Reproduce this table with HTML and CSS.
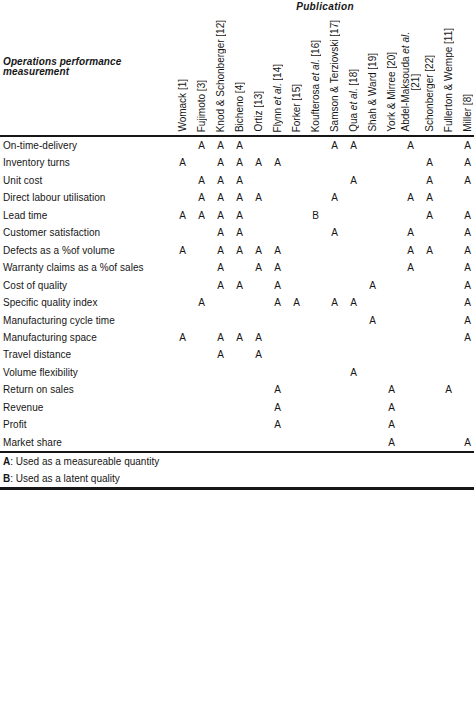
FILE: index.html
```html
<!DOCTYPE html>
<html lang="en">
<head>
<meta charset="utf-8">
<title>Operations performance measurement</title>
<link rel="stylesheet" href="styles.css">
</head>
<body>
<div class="frame">
<table class="matrix">
<colgroup>
<col class="c-label">
<col class="c-pub"><col class="c-pub"><col class="c-pub"><col class="c-pub">
<col class="c-pub"><col class="c-pub"><col class="c-pub"><col class="c-pub">
<col class="c-pub"><col class="c-pub"><col class="c-pub"><col class="c-pub">
<col class="c-pub"><col class="c-pub"><col class="c-pub"><col class="c-pub">
</colgroup>
<thead>
<tr class="pub-row">
<th class="label-head" rowspan="2">Operations performance measurement</th>
<th class="pub-title" colspan="16">Publication</th>
</tr>
<tr class="names-row">
<th><div class="vbox"><span class="vtext">Womack [1]</span></div></th>
<th><div class="vbox"><span class="vtext">Fujimoto [3]</span></div></th>
<th><div class="vbox"><span class="vtext">Knod &amp; Schonberger [12]</span></div></th>
<th><div class="vbox"><span class="vtext">Bicheno [4]</span></div></th>
<th><div class="vbox"><span class="vtext">Ortiz [13]</span></div></th>
<th><div class="vbox"><span class="vtext">Flynn <i>et al</i>. [14]</span></div></th>
<th><div class="vbox"><span class="vtext">Forker [15]</span></div></th>
<th><div class="vbox"><span class="vtext">Koufterosa <i>et al</i>. [16]</span></div></th>
<th><div class="vbox"><span class="vtext">Samson &amp; Terziovski [17]</span></div></th>
<th><div class="vbox"><span class="vtext">Qua <i>et al</i>. [18]</span></div></th>
<th><div class="vbox"><span class="vtext">Shah &amp; Ward [19]</span></div></th>
<th><div class="vbox"><span class="vtext">York &amp; Mirree [20]</span></div></th>
<th><div class="vbox"><span class="vtext">Abdel-Maksouda <i>et al</i>.<br>[21]</span></div></th>
<th><div class="vbox"><span class="vtext">Schonberger [22]</span></div></th>
<th><div class="vbox"><span class="vtext">Fullerton &amp; Wempe [11]</span></div></th>
<th><div class="vbox"><span class="vtext">Miller [8]</span></div></th>
</tr>
</thead>
<tbody>
<tr><th>On-time-delivery</th><td></td><td>A</td><td>A</td><td>A</td><td></td><td></td><td></td><td></td><td>A</td><td>A</td><td></td><td></td><td>A</td><td></td><td></td><td>A</td></tr>
<tr><th>Inventory turns</th><td>A</td><td></td><td>A</td><td>A</td><td>A</td><td>A</td><td></td><td></td><td></td><td></td><td></td><td></td><td></td><td>A</td><td></td><td>A</td></tr>
<tr><th>Unit cost</th><td></td><td>A</td><td>A</td><td>A</td><td></td><td></td><td></td><td></td><td></td><td>A</td><td></td><td></td><td></td><td>A</td><td></td><td>A</td></tr>
<tr><th>Direct labour utilisation</th><td></td><td>A</td><td>A</td><td>A</td><td>A</td><td></td><td></td><td></td><td>A</td><td></td><td></td><td></td><td>A</td><td>A</td><td></td><td></td></tr>
<tr><th>Lead time</th><td>A</td><td>A</td><td>A</td><td>A</td><td></td><td></td><td></td><td>B</td><td></td><td></td><td></td><td></td><td></td><td>A</td><td></td><td>A</td></tr>
<tr><th>Customer satisfaction</th><td></td><td></td><td>A</td><td>A</td><td></td><td></td><td></td><td></td><td>A</td><td></td><td></td><td></td><td>A</td><td></td><td></td><td>A</td></tr>
<tr><th>Defects as a %of volume</th><td>A</td><td></td><td>A</td><td>A</td><td>A</td><td>A</td><td></td><td></td><td></td><td></td><td></td><td></td><td>A</td><td>A</td><td></td><td>A</td></tr>
<tr><th>Warranty claims as a %of sales</th><td></td><td></td><td>A</td><td></td><td>A</td><td>A</td><td></td><td></td><td></td><td></td><td></td><td></td><td>A</td><td></td><td></td><td>A</td></tr>
<tr><th>Cost of quality</th><td></td><td></td><td>A</td><td>A</td><td></td><td>A</td><td></td><td></td><td></td><td></td><td>A</td><td></td><td></td><td></td><td></td><td>A</td></tr>
<tr><th>Specific quality index</th><td></td><td>A</td><td></td><td></td><td></td><td>A</td><td>A</td><td></td><td>A</td><td>A</td><td></td><td></td><td></td><td></td><td></td><td>A</td></tr>
<tr><th>Manufacturing cycle time</th><td></td><td></td><td></td><td></td><td></td><td></td><td></td><td></td><td></td><td></td><td>A</td><td></td><td></td><td></td><td></td><td>A</td></tr>
<tr><th>Manufacturing space</th><td>A</td><td></td><td>A</td><td>A</td><td>A</td><td></td><td></td><td></td><td></td><td></td><td></td><td></td><td></td><td></td><td></td><td>A</td></tr>
<tr><th>Travel distance</th><td></td><td></td><td>A</td><td></td><td>A</td><td></td><td></td><td></td><td></td><td></td><td></td><td></td><td></td><td></td><td></td><td></td></tr>
<tr><th>Volume flexibility</th><td></td><td></td><td></td><td></td><td></td><td></td><td></td><td></td><td></td><td>A</td><td></td><td></td><td></td><td></td><td></td><td></td></tr>
<tr><th>Return on sales</th><td></td><td></td><td></td><td></td><td></td><td>A</td><td></td><td></td><td></td><td></td><td></td><td>A</td><td></td><td></td><td>A</td><td></td></tr>
<tr><th>Revenue</th><td></td><td></td><td></td><td></td><td></td><td>A</td><td></td><td></td><td></td><td></td><td></td><td>A</td><td></td><td></td><td></td><td></td></tr>
<tr><th>Profit</th><td></td><td></td><td></td><td></td><td></td><td>A</td><td></td><td></td><td></td><td></td><td></td><td>A</td><td></td><td></td><td></td><td></td></tr>
<tr><th>Market share</th><td></td><td></td><td></td><td></td><td></td><td></td><td></td><td></td><td></td><td></td><td></td><td>A</td><td></td><td></td><td></td><td>A</td></tr>
</tbody>
<tfoot>
<tr class="legend first"><td colspan="17"><b>A</b>: Used as a measureable quantity</td></tr>
<tr class="legend last"><td colspan="17"><b>B</b>: Used as a latent quality</td></tr>
</tfoot>
</table>
</div>
</body>
</html>
```
FILE: styles.css
```css
html, body {
  margin: 0;
  padding: 0;
  background: #ffffff;
}

body {
  font-family: "Liberation Sans", Arial, sans-serif;
  font-size: 10px;
  color: #161616;
  overflow: hidden;
}

.frame {
  width: 474px;
  overflow: hidden;
}

.matrix {
  border-collapse: collapse;
  table-layout: fixed;
  width: 477px;
}

.c-label { width: 173px; }
.c-pub { width: 19px; }

.matrix th,
.matrix td {
  padding: 0;
}

.pub-row th {
  height: 13px;
}

.pub-title {
  font-weight: bold;
  font-style: italic;
  text-align: center;
  line-height: 13px;
  vertical-align: top;
  letter-spacing: 0.35px;
}

.label-head {
  font-weight: bold;
  font-style: italic;
  text-align: left;
  vertical-align: top;
  padding: 57px 0 0 3px !important;
  line-height: 9.5px;
  letter-spacing: 0.1px;
  border-bottom: 2px solid #161616;
}

.names-row th {
  font-weight: normal;
  border-bottom: 2px solid #161616;
  vertical-align: bottom;
}

.vbox {
  height: 122px;
  box-sizing: border-box;
  padding-bottom: 3px;
  display: flex;
  justify-content: center;
  align-items: flex-end;
}

.vtext {
  writing-mode: vertical-rl;
  transform: rotate(180deg);
  white-space: nowrap;
  line-height: 10px;
}

tbody th {
  font-weight: normal;
  text-align: left;
  padding-left: 3px !important;
  height: 17.45px;
  line-height: 17.45px;
  white-space: nowrap;
  letter-spacing: 0.05px;
}

tbody td {
  text-align: center;
  height: 17.45px;
  line-height: 17.45px;
}

.legend td {
  text-align: left;
  padding-left: 3px !important;
  height: 17px;
  line-height: 17px;
}

.legend.first td {
  border-top: 2px solid #161616;
}

.legend.last td {
  border-bottom: 3px solid #161616;
}
```
